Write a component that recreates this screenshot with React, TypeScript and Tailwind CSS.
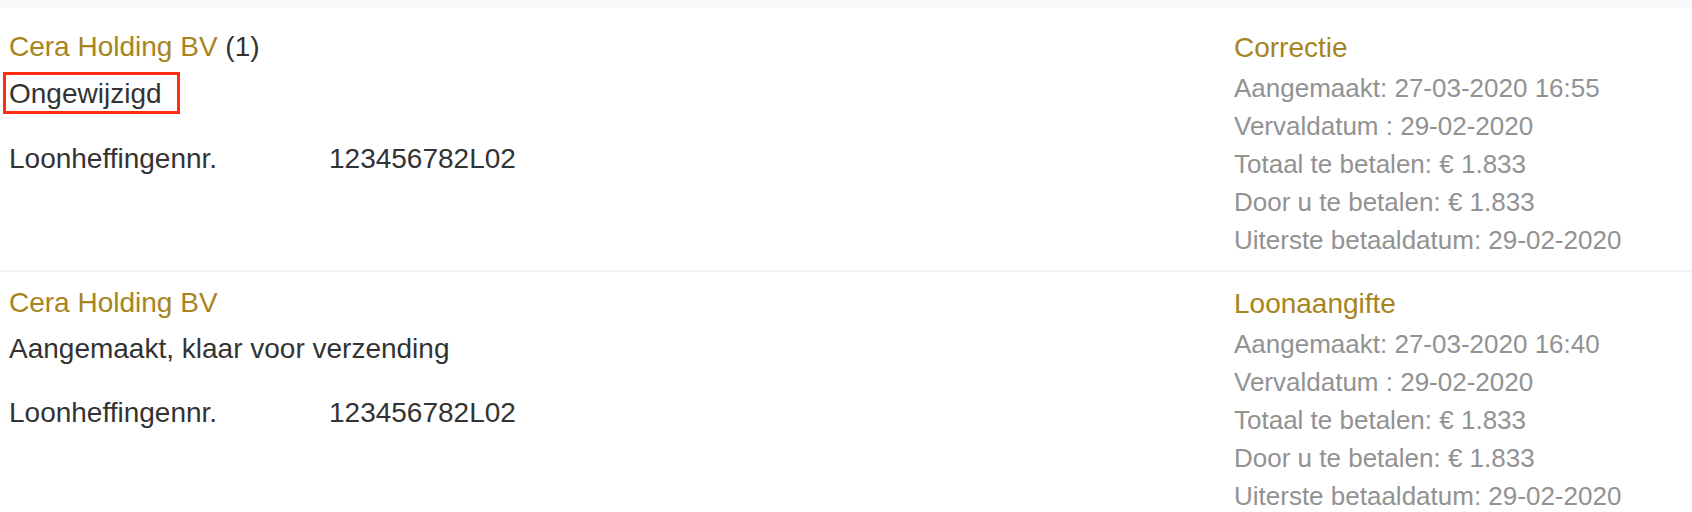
import React from "react";

type Row = {
  company: string;
  count?: string;
  status: string;
  highlight?: boolean;
  number: string;
  type: string;
  created: string;
};

const rows: Row[] = [
  {
    company: "Cera Holding BV",
    count: "(1)",
    status: "Ongewijzigd",
    highlight: true,
    number: "123456782L02",
    type: "Correctie",
    created: "27-03-2020 16:55",
  },
  {
    company: "Cera Holding BV",
    status: "Aangemaakt, klaar voor verzending",
    number: "123456782L02",
    type: "Loonaangifte",
    created: "27-03-2020 16:40",
  },
];

function RowItem({ row, first }: { row: Row; first: boolean }) {
  return (
    <div
      className={
        first
          ? "flex pl-[9px] pt-[23px] pb-[11px]"
          : "flex pl-[9px] pt-[15px] pb-[11px] border-t-2 border-[#f4f4f4]"
      }
    >
      <div className="flex-1 flex flex-col">
        <div className="text-[28px] leading-[32px]">
          <span className="text-[#a7841c]">{row.company}</span>
          {row.count ? <span className="text-[#333333]"> {row.count}</span> : null}
        </div>
        <div
          className={
            row.highlight
              ? "relative mt-[15px] text-[28px] leading-[32px] text-[#333333]"
              : "relative mt-[14px] text-[28px] leading-[32px] text-[#333333]"
          }
        >
          <span>{row.status}</span>
          {row.highlight ? (
            <div className="absolute left-[-6px] top-[-6px] w-[177px] h-[42px] border-[3px] border-[#ff2b12] pointer-events-none" />
          ) : null}
        </div>
        <div
          className={
            row.highlight
              ? "mt-[33px] flex text-[28px] leading-[32px] text-[#333333]"
              : "mt-[32px] flex text-[28px] leading-[32px] text-[#333333]"
          }
        >
          <div className="w-[320px] shrink-0">Loonheffingennr.</div>
          <div>{row.number}</div>
        </div>
      </div>
      <div className="w-[458px] shrink-0 pt-[1px] flex flex-col">
        <div className="text-[28px] leading-[32px] text-[#a7841c]">{row.type}</div>
        <div className="mt-[5px] text-[26px] leading-[38px] text-[#929292]">
          <div>Aangemaakt: {row.created}</div>
          <div>Vervaldatum : 29-02-2020</div>
          <div>Totaal te betalen: € 1.833</div>
          <div>Door u te betalen: € 1.833</div>
          <div>Uiterste betaaldatum: 29-02-2020</div>
        </div>
      </div>
    </div>
  );
}

export default function App() {
  return (
    <div
      className="w-[1692px] h-[512px] overflow-hidden bg-white"
      style={{ fontFamily: '"Liberation Sans", Arial, Helvetica, sans-serif' }}
    >
      <div className="h-[8px] bg-[#fafafa]" />
      {rows.map((row, i) => (
        <RowItem key={i} row={row} first={i === 0} />
      ))}
    </div>
  );
}
